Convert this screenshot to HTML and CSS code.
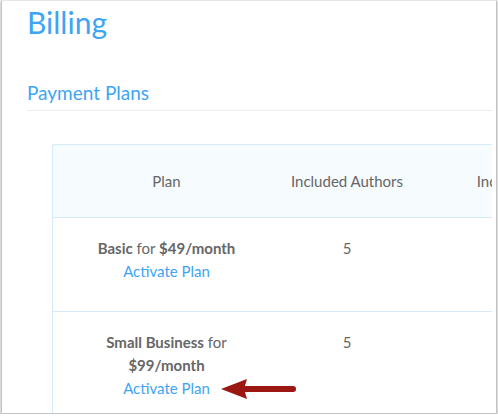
FILE: index.html
```html
<!DOCTYPE html>
<html>
<head>
<meta charset="utf-8">
<link rel="stylesheet" href="styles.css">
</head>
<body>
<div class="window">
  <div class="content">
    <h1 class="title">Billing</h1>
    <h2 class="section">Payment Plans</h2>
    <div class="table-wrap">
      <table class="plans">
        <thead>
          <tr>
            <th class="c1">Plan</th>
            <th class="c2">Included Authors</th>
            <th class="c3">Included Readers</th>
          </tr>
        </thead>
        <tbody>
          <tr>
            <td class="c1"><b>Basic</b> for <b>$49/month</b><br><a href="#">Activate Plan</a></td>
            <td class="c2">5</td>
            <td class="c3"></td>
          </tr>
          <tr>
            <td class="c1"><b>Small Business</b> for<br><b>$99/month</b><br><a href="#">Activate Plan</a></td>
            <td class="c2">5</td>
            <td class="c3"></td>
          </tr>
        </tbody>
      </table>
    </div>
  </div>
  <svg class="arrow" width="80" height="24" viewBox="0 0 80 24">
    <polygon points="0,12 26,2 23,12 26,22" fill="#9b1712"/>
    <line x1="22" y1="12" x2="72" y2="12" stroke="#9b1712" stroke-width="6" stroke-linecap="round"/>
  </svg>
</div>
</body>
</html>
```
FILE: styles.css
```css
html, body {
  margin: 0;
  padding: 0;
  background: #ffffff;
}
body {
  font-family: Lato, "Open Sans", sans-serif;
  color: #666666;
}
.window {
  position: relative;
  margin-left: 1px;
  width: 496px;
  height: 414px;
  box-sizing: border-box;
  border: 1px solid #c4c4c4;
  border-top-color: #e6e6e6;
  box-shadow: 0 1px 2px rgba(0,0,0,0.45);
  overflow: hidden;
  background: #fff;
}
.content {
  width: 465px;
  margin-left: 25px;
  overflow: hidden;
  height: 412px;
}
.title {
  margin: 3px 0 0 0;
  font-weight: 400;
  font-size: 30px;
  line-height: 36px;
  color: #3ea4f4;
}
.section {
  margin: 41px 0 0 0;
  font-weight: 400;
  font-size: 19px;
  line-height: 24px;
  color: #3ea4f4;
  padding-bottom: 5px;
  border-bottom: 1px solid #ececec;
}
.table-wrap {
  margin: 33px 0 0 25px;
  overflow: hidden;
}
.plans {
  border-collapse: separate;
  border-spacing: 0;
  width: 600px;
  font-size: 15px;
  line-height: 23px;
}
.plans th {
  font-weight: 400;
  background: #f6fbfe;
  border-top: 1px solid #d6eaf8;
  border-bottom: 1px solid #d6eaf8;
  padding: 25px 0 24px;
  text-align: center;
  color: #666;
}
.plans th.c1 {
  border-left: 1px solid #d6eaf8;
  border-top-left-radius: 3px;
}
.plans td {
  vertical-align: top;
  text-align: center;
  padding: 19px 0 28px;
  border-bottom: 1px solid #d6eaf8;
}
.plans td.c1 {
  border-left: 1px solid #d6eaf8;
}
.c1 { width: 227px; }
.c2 { width: 134px; }
.c3 { width: 238px; }
.plans b {
  font-weight: 700;
  color: #666;
}
.plans a {
  color: #3ea4f4;
  text-decoration: none;
}
.arrow {
  position: absolute;
  left: 219px;
  top: 376px;
}
```
